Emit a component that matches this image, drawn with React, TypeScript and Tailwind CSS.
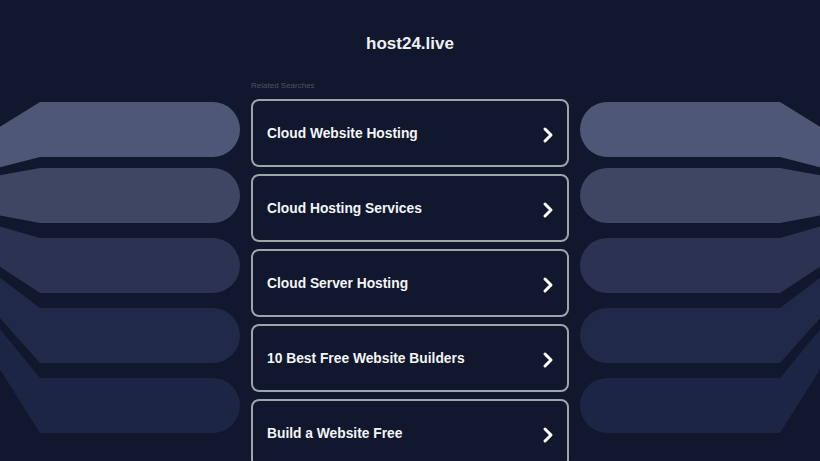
import React from 'react';
import { ChevronRight } from 'lucide-react';

const searches = [
  'Cloud Website Hosting',
  'Cloud Hosting Services',
  'Cloud Server Hosting',
  '10 Best Free Website Builders',
  'Build a Website Free',
];

// top/bottom of each pill and its fill
const pills = [
  { top: 102, bottom: 157, fill: '#4e5876' },
  { top: 168, bottom: 223, fill: '#3e4664' },
  { top: 238, bottom: 293, fill: '#2b3252' },
  { top: 308, bottom: 363, fill: '#212948' },
  { top: 378, bottom: 433, fill: '#1d2545' },
];

// vanishing point of the side extrusions, measured from the outer edge
const VP_X = -110;
const VP_Y = 195;

function edgeY(y: number) {
  // y of the line from (40, y) to the vanishing point, at the outer edge x = 0
  return y + ((VP_Y - y) * 40) / (40 - VP_X);
}

function SidePills({ mirror }: { mirror?: boolean }) {
  return (
    <svg
      width="240"
      height="461"
      viewBox="0 0 240 461"
      className={mirror ? '-scale-x-100' : ''}
    >
      {pills.map((p, i) => {
        const r = (p.bottom - p.top) / 2;
        const d = `M0 ${edgeY(p.top)} L40 ${p.top} L${240 - r} ${p.top} A${r} ${r} 0 0 1 ${240 - r} ${p.bottom} L40 ${p.bottom} L0 ${edgeY(p.bottom)} Z`;
        return <path key={i} d={d} fill={p.fill} />;
      })}
    </svg>
  );
}

export default function App() {
  return (
    <div
      className="flex h-[461px] w-[820px] overflow-hidden bg-[#11172c] text-white"
      style={{ fontFamily: '"Liberation Sans", Arial, sans-serif' }}
    >
      <div className="w-[240px] shrink-0">
        <SidePills />
      </div>

      <div className="mx-[11px] flex w-[318px] shrink-0 flex-col">
        <h1 className="mt-[33px] text-center text-[17px] font-bold leading-[22px] text-[#eef0f4]">
          host24.live
        </h1>
        <p className="mt-[26px] text-[8px] leading-[10px] text-[#4d5468]">Related Searches</p>
        <div className="mt-[8px] flex flex-col gap-[7px]">
          {searches.map((s) => (
            <a
              key={s}
              href="#"
              className="flex h-[68px] shrink-0 items-center justify-between rounded-[8px] border-2 border-[#9ea3ad] bg-[#11172c] pl-[14px] pr-[7px] pt-[3px]"
            >
              <span className="text-[13.8px] font-bold text-[#f4f5f7]">{s}</span>
              <ChevronRight size={24} strokeWidth={3} className="text-white" />
            </a>
          ))}
        </div>
      </div>

      <div className="w-[240px] shrink-0">
        <SidePills mirror />
      </div>
    </div>
  );
}
